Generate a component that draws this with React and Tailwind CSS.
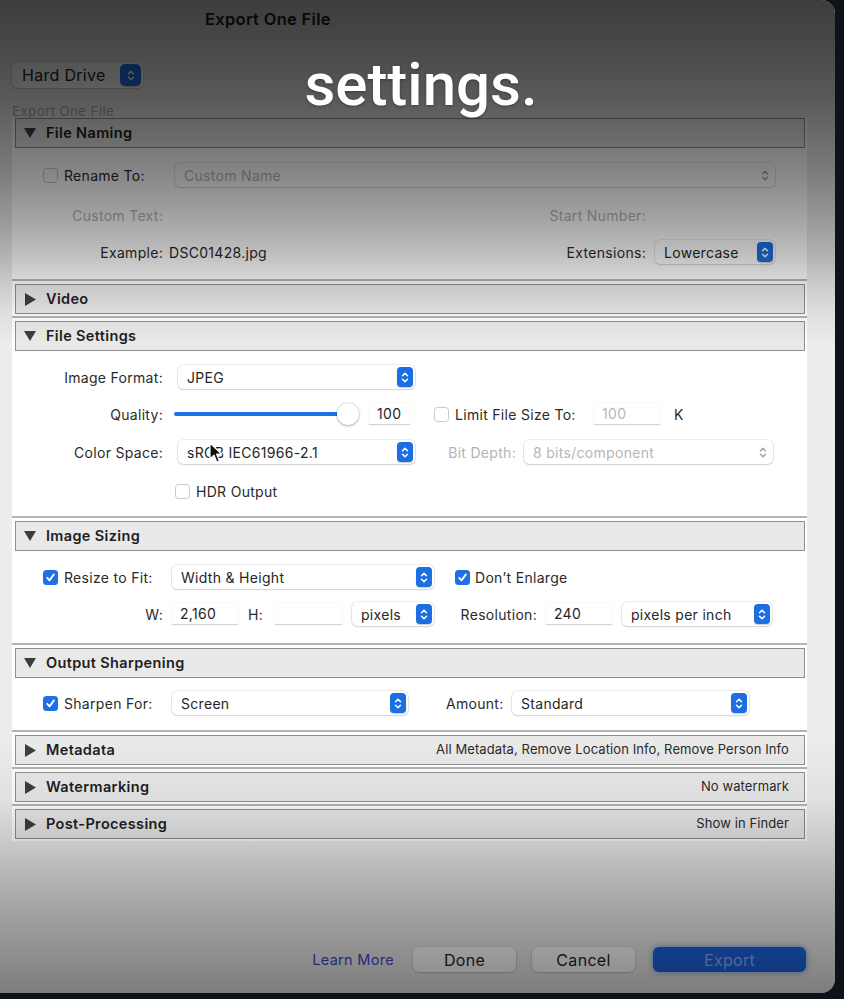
import React from 'react';

const Stepper = ({ blue = true, big = false }) => {
  const box = big ? 'h-[22px] w-[21px] rounded-[5px]' : 'h-[20px] w-[16px] rounded-[4px]';
  return (
    <span className={`flex shrink-0 items-center justify-center ${box} ${blue ? 'bg-[#1b6fe3] shadow-[0_1px_1px_rgba(0,0,0,0.2)]' : ''}`}>
      <svg width="8" height="13" viewBox="0 0 8 13" fill="none" stroke={blue ? '#ffffff' : '#a3a3a3'} strokeWidth="1.5" strokeLinecap="round" strokeLinejoin="round">
        <path d="M1.5 4.8 4 2.2 6.5 4.8" />
        <path d="M1.5 8.2 4 10.8 6.5 8.2" />
      </svg>
    </span>
  );
};

const Select = ({ w, text, disabled, className = '' }) => (
  <div className={`flex h-[24px] shrink-0 items-center justify-between rounded-[5px] bg-white pl-[9px] pr-[2px] shadow-[0_0_0_0.5px_rgba(0,0,0,0.14),0_1px_2px_rgba(0,0,0,0.12)] ${w} ${className}`}>
    <span className={disabled ? 'text-[#b6b6b6]' : 'text-[#262626]'}>{text}</span>
    <Stepper blue={!disabled} />
  </div>
);

const Check = ({ on, className = '' }) =>
  on ? (
    <span className={`flex h-[15px] w-[15px] shrink-0 items-center justify-center rounded-[3.5px] bg-[#1f6fe5] ${className}`}>
      <svg width="11" height="11" viewBox="0 0 11 11" fill="none" stroke="white" strokeWidth="1.8" strokeLinecap="round" strokeLinejoin="round">
        <path d="M2.2 5.8 4.5 8.4 8.9 2.4" />
      </svg>
    </span>
  ) : (
    <span className={`h-[15px] w-[15px] shrink-0 rounded-[3.5px] border border-[#c9c9c9] bg-white ${className}`} />
  );

const Field = ({ w, text, faded, className = '' }) => (
  <div className={`flex h-[22px] shrink-0 items-center border-b border-[#d4d4d4] bg-white pl-[8px] shadow-[0_0_0_0.5px_rgba(0,0,0,0.05)] ${w} ${className}`}>
    <span className={faded ? 'text-[#b8b8b8]' : 'text-[#262626]'}>{text}</span>
  </div>
);

const Down = () => (
  <svg width="12" height="10" viewBox="0 0 12 10"><path d="M0 0 H12 L6 10 Z" fill="#3d3d3d" /></svg>
);
const Right = () => (
  <svg width="11" height="13" viewBox="0 0 11 13"><path d="M0 0 L11 6.5 L0 13 Z" fill="#3d3d3d" /></svg>
);

const Section = ({ title, open, summary, first, children }) => (
  <div className={first ? 'pb-[2px]' : 'border-t-2 border-[#b4b4b4] pb-[2px] pt-[3px]'}>
    <div className="ml-[3px] mr-[2px] flex h-[30px] items-center border-[1.5px] border-[#8f8f8f] bg-[#e9e9e9] pl-[8px] pr-[15px]">
      <span className="flex w-[12px] justify-center">{open ? <Down /> : <Right />}</span>
      <span className="ml-[10px] text-[14.5px] font-semibold tracking-[0.35px] text-[#1e1e1e]">{title}</span>
      {summary && <span className="ml-auto text-[13px] tracking-[0.1px] text-[#2a2a2a]">{summary}</span>}
    </div>
    {children}
  </div>
);

const Label = ({ w = 'w-[151px]', children, faded, className = '' }) => (
  <span className={`shrink-0 text-right ${w} ${faded ? 'text-[#b4b4b4]' : 'text-[#2a2a2a]'} ${className}`}>{children}</span>
);

export default function App() {
  return (
    <div className="min-h-[999px] w-[844px] bg-[#0e1319] font-['Inter','Noto_Sans',sans-serif] text-[14px] tracking-[0.3px]">
      <div className="relative flex h-[993px] w-[835px] flex-col rounded-r-[14px] bg-[#ececec]">
        <div className="h-[37px] shrink-0 border-b border-[#dcdcdc] pl-[205px] pt-[7px] text-[16.5px] font-semibold text-[#1e1e1e]">
          Export One File
        </div>

        <div className="ml-[12px] mt-[25px] flex h-[26px] w-[131px] shrink-0 items-center justify-between rounded-[6px] bg-white pl-[10px] pr-[2px] text-[16px] text-[#222] shadow-[0_0_0_0.5px_rgba(0,0,0,0.12),0_1px_2px_rgba(0,0,0,0.15)]">
          <span>Hard Drive</span>
          <Stepper big />
        </div>

        <div className="ml-[12px] mt-[16px] h-[14px] shrink-0 text-[13.5px] leading-[15px] text-[#a8a8a8]">Export One File</div>

        <div className="ml-[12px] w-[795px] shrink-0 bg-white">
          <Section title="File Naming" open first>
            <div className="flex h-[129px] flex-col">
              <div className="mt-[15px] flex h-[24px] items-center">
                <Check className="ml-[31px]" />
                <span className="ml-[6px] w-[111px] shrink-0 text-[#2a2a2a]">Rename To:</span>
                <Select w="w-[600px]" text="Custom Name" disabled />
              </div>
              <div className="mt-[16px] flex h-[24px] items-center">
                <Label faded>Custom Text:</Label>
                <Label w="w-[483px]" faded>Start Number:</Label>
              </div>
              <div className="mt-[13px] flex h-[24px] items-center">
                <Label>Example:</Label>
                <span className="ml-[6px] w-[300px] shrink-0 text-[#262626]">DSC01428.jpg</span>
                <Label w="w-[177px]">Extensions:</Label>
                <Select w="w-[120px]" text="Lowercase" className="ml-[9px]" />
              </div>
            </div>
          </Section>

          <Section title="Video" />

          <Section title="File Settings" open>
            <div className="flex h-[163px] flex-col">
              <div className="mt-[14px] flex h-[24px] items-center">
                <Label>Image Format:</Label>
                <Select w="w-[237px]" text="JPEG" className="ml-[15px]" />
              </div>
              <div className="mt-[13px] flex h-[24px] items-center">
                <Label>Quality:</Label>
                <div className="relative ml-[10px] h-[24px] w-[187px] shrink-0">
                  <div className="absolute left-[1px] top-[10px] h-[4px] w-[170px] rounded-full bg-[#1f6fe5]" />
                  <div className="absolute left-[164px] top-[1px] h-[22px] w-[22px] rounded-full bg-white shadow-[0_0_0_0.5px_rgba(0,0,0,0.15),0_1px_3px_rgba(0,0,0,0.25)]" />
                </div>
                <Field w="w-[41px]" text="100" className="ml-[9px]" />
                <Check className="ml-[24px]" />
                <span className="ml-[6px] w-[139px] shrink-0 text-[#2a2a2a]">Limit File Size To:</span>
                <Field w="w-[66px]" text="100" faded />
                <span className="ml-[14px] text-[#2a2a2a]">K</span>
              </div>
              <div className="mt-[14px] flex h-[24px] items-center">
                <Label>Color Space:</Label>
                <Select w="w-[237px]" text="sRGB IEC61966-2.1" className="ml-[15px]" />
                <Label w="w-[77px]" faded className="ml-[32px] pr-[8px]">Bit Depth:</Label>
                <Select w="w-[249px]" text="8 bits/component" disabled />
              </div>
              <div className="mt-[15px] flex h-[24px] items-center">
                <Check className="ml-[163px]" />
                <span className="ml-[6px] text-[#2a2a2a]">HDR Output</span>
              </div>
            </div>
          </Section>

          <Section title="Image Sizing" open>
            <div className="flex h-[90px] flex-col">
              <div className="mt-[14px] flex h-[24px] items-center">
                <Check on className="ml-[31px]" />
                <span className="ml-[6px] w-[108px] shrink-0 text-[#2a2a2a]">Resize to Fit:</span>
                <Select w="w-[262px]" text="Width & Height" />
                <Check on className="ml-[21px]" />
                <span className="ml-[5px] text-[#2a2a2a]">Don’t Enlarge</span>
              </div>
              <div className="mt-[13px] flex h-[24px] items-center">
                <Label>W:</Label>
                <Field w="w-[66px]" text="2,160" className="ml-[9px]" />
                <span className="ml-[10px] w-[27px] shrink-0 text-[#2a2a2a]">H:</span>
                <Field w="w-[67px]" text="" />
                <Select w="w-[82px]" text="pixels" className="ml-[10px]" />
                <Label w="w-[86px]" className="ml-[26px] pr-[9px]">Resolution:</Label>
                <Field w="w-[66px]" text="240" />
                <Select w="w-[150px]" text="pixels per inch" className="ml-[10px]" />
              </div>
            </div>
          </Section>

          <Section title="Output Sharpening" open>
            <div className="flex h-[50px] flex-col">
              <div className="mt-[13px] flex h-[24px] items-center">
                <Check on className="ml-[31px]" />
                <span className="ml-[6px] w-[108px] shrink-0 text-[#2a2a2a]">Sharpen For:</span>
                <Select w="w-[236px]" text="Screen" />
                <Label w="w-[66px]" className="ml-[38px] pr-[9px]">Amount:</Label>
                <Select w="w-[237px]" text="Standard" />
              </div>
            </div>
          </Section>

          <Section title="Metadata" summary="All Metadata, Remove Location Info, Remove Person Info" />
          <Section title="Watermarking" summary="No watermark" />
          <Section title="Post-Processing" summary="Show in Finder" />
        </div>

        <div className="mt-[106px] flex h-[25px] shrink-0 items-center justify-end pr-[29px] text-[16px]">
          <span className="mr-[19px] text-[14.5px] text-[#3f48cc]">Learn More</span>
          <div className="flex h-[25px] w-[103px] items-center justify-center rounded-[6px] bg-white text-[#1e1e1e] shadow-[0_0_0_0.5px_rgba(0,0,0,0.1),0_1px_2px_rgba(0,0,0,0.15)]">Done</div>
          <div className="ml-[16px] flex h-[25px] w-[103px] items-center justify-center rounded-[6px] bg-white text-[#1e1e1e] shadow-[0_0_0_0.5px_rgba(0,0,0,0.1),0_1px_2px_rgba(0,0,0,0.15)]">Cancel</div>
          <div className="ml-[18px] flex h-[25px] w-[153px] items-center justify-center rounded-[6px] bg-[#1d63e0] text-[#8fb0f0] shadow-[0_0_6px_rgba(29,99,224,0.6)]">Export</div>
        </div>

        <div className="pointer-events-none absolute inset-0 rounded-r-[14px] bg-[linear-gradient(to_bottom,rgba(0,0,0,0.74)_0px,rgba(0,0,0,0.7)_40px,rgba(0,0,0,0.62)_100px,rgba(0,0,0,0.55)_135px,rgba(0,0,0,0.47)_175px,rgba(0,0,0,0.37)_215px,rgba(0,0,0,0.26)_252px,rgba(0,0,0,0.15)_282px,rgba(0,0,0,0.06)_312px,rgba(0,0,0,0)_345px,rgba(0,0,0,0)_740px,rgba(0,0,0,0.05)_800px,rgba(0,0,0,0.17)_850px,rgba(0,0,0,0.29)_900px,rgba(0,0,0,0.39)_950px,rgba(0,0,0,0.47)_993px)]" />

        <svg className="pointer-events-none absolute left-[209px] top-[442px]" width="15" height="22" viewBox="0 0 15 22">
          <path d="M1 1 L1 17 L5 13.2 L7.8 20 L10.4 18.9 L7.6 12.2 L12.8 12.2 Z" fill="#111" stroke="#fff" strokeWidth="1.2" strokeLinejoin="round" />
        </svg>

        <div className="pointer-events-none absolute left-0 top-[55px] w-[842px] text-center font-['Roboto',sans-serif] text-[60px] font-medium leading-none tracking-normal text-white [text-shadow:0_1px_3px_rgba(0,0,0,0.35)]">
          settings.
        </div>
      </div>
    </div>
  );
}
